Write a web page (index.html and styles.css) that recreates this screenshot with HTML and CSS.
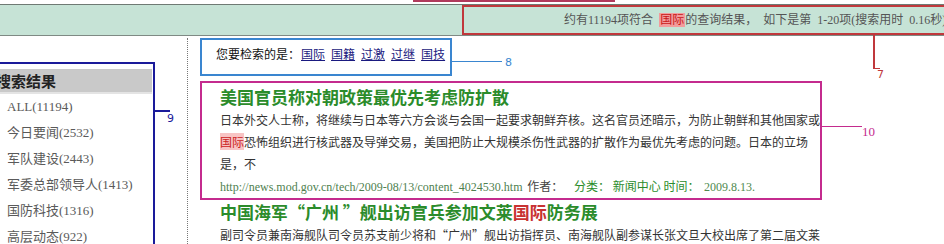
FILE: index.html
```html
<!DOCTYPE html>
<html lang="zh-CN">
<head>
    <meta charset="UTF-8">
    <title>搜索结果</title>
    <link rel="stylesheet" href="styles.css">
</head>
<body>

    <div class="topbar"><span class="topmark"></span></div>

    <!-- Barra de resultado -->
    <div class="header">
        <div class="stats">
            约有11194项符合&nbsp; <span class="hl">国际</span>的查询结果，&nbsp; 如下是第&nbsp; 1-20项(搜索用时&nbsp; 0.16秒)
            <span class="note note-7">7</span>
        </div>
    </div>

    <div class="main">
        <!-- Coluna lateral -->
        <div class="sidebar">
            <h2>搜索结果</h2>
            <ul class="cats">
                <li>ALL(11194)</li>
                <li>今日要闻(2532)</li>
                <li>军队建设(2443)</li>
                <li>军委总部领导人(1413)</li>
                <li>国防科技(1316)</li>
                <li>高层动态(922)</li>
            </ul>
            <span class="note note-9">9</span>
        </div>

        <!-- Resultados -->
        <div class="content">
            <div class="suggest">
                您要检索的是：<a href="#">国际</a><a href="#">国籍</a><a href="#">过激</a><a href="#">过继</a><a href="#">国技</a>
                <span class="note note-8">8</span>
            </div>

            <div class="result boxed">
                <h3>美国官员称对朝政策最优先考虑防扩散</h3>
                <p>日本外交人士称，将继续与日本等六方会谈与会国一起要求朝鲜弃核。这名官员还暗示，为防止朝鲜和其他国家或<span class="hl">国际</span>恐怖组织进行核武器及导弹交易，美国把防止大规模杀伤性武器的扩散作为最优先考虑的问题。日本的立场是，不</p>
                <div class="meta">
                    <span class="url">http://news.mod.gov.cn/tech/2009-08/13/content_4024530.htm</span>
                    <span class="author">作者：</span>
                    <span class="label cat">分类：</span>
                    <span class="label">新闻中心</span>
                    <span class="label">时间：</span>
                    <span class="date">2009.8.13.</span>
                </div>
                <span class="note note-10">10</span>
            </div>

            <div class="result">
                <h3>中国海军“广州 ”舰出访官兵参加文莱<span class="red">国际</span>防务展</h3>
                <p>副司令员兼南海舰队司令员苏支前少将和“广州”舰出访指挥员、南海舰队副参谋长张文旦大校出席了第二届文莱</p>
            </div>
        </div>
    </div>

</body>
</html>
```

FILE: styles.css
```css
/* Estilos gerais */
body {
    margin: 0;
    font-family: "Liberation Serif", "Noto Sans CJK SC", serif;
    font-size: 12px;
    color: #333333;
    background-color: #ffffff;
    overflow: hidden;
}

.topbar {
    height: 4px;
}

.topmark {
    display: block;
    margin-left: 413px;
    width: 202px;
    height: 2px;
    background-color: #b03a5c;
}

/* Barra verde */
.header {
    height: 30px;
    background-color: #c6e3d6;
    border-top: 1px solid #6f7a74;
    border-bottom: 1px solid #7f8a84;
}

.stats {
    position: relative;
    box-sizing: border-box;
    margin-left: 462px;
    width: 520px;
    height: 30px;
    padding-left: 100px;
    border: 2px solid #c0383c;
    line-height: 26px;
    white-space: nowrap;
    color: #555555;
}

.stats .hl {
    padding: 0 1px;
    background-color: #f29c9c;
    color: #c81818;
}

/* Anotações */
.note {
    position: absolute;
    font-family: "DejaVu Sans", sans-serif;
    font-size: 11px;
    line-height: 12px;
}

.note::before {
    content: "";
    position: absolute;
}

.note-7 {
    left: 413px;
    top: 62px;
    color: #c0383c;
}

.note-7::before {
    left: -4px;
    top: -35px;
    width: 5px;
    height: 34px;
    border-left: 2px solid #c0383c;
    border-bottom: 1px solid #c0383c;
}

.note-9 {
    left: 100%;
    top: 49px;
    margin-left: 14px;
    color: #1a1a9a;
}

.note-9::before {
    right: 4px;
    top: -3px;
    width: 17px;
    border-top: 2px solid #1a1a9a;
}

.note-8 {
    left: 100%;
    top: 17px;
    margin-left: 55px;
    color: #3a86d0;
}

.note-8::before {
    right: 10px;
    top: 4px;
    width: 50px;
    border-top: 1px solid #3a86d0;
}

.note-10 {
    left: 100%;
    top: 43px;
    margin-left: 42px;
    color: #c42b8e;
    font-family: "Liberation Serif", serif;
    font-size: 13px;
}

.note-10::before {
    right: 100%;
    top: 0;
    width: 40px;
    border-top: 1px solid #c42b8e;
}

/* Layout principal */
.main {
    display: flex;
    align-items: flex-start;
}

.sidebar {
    position: relative;
    width: 153px;
    min-height: 200px;
    margin-top: 26px;
    padding-top: 5px;
    border-top: 2px solid #1a1a9a;
    border-right: 2px solid #1a1a9a;
}

.sidebar h2 {
    margin: 0 1px 0 0;
    height: 23px;
    padding-left: 0;
    text-indent: -4px;
    background-color: #c9c9c9;
    border-bottom: 2px solid #e4e4e4;
    font-family: "Noto Sans CJK SC", sans-serif;
    font-size: 15px;
    line-height: 23px;
    color: #222222;
}

.cats {
    list-style: none;
    margin: 0;
    padding: 0 0 0 7px;
}

.cats li {
    font-size: 13px;
    line-height: 26px;
    color: #5a5a5a;
}

.content {
    margin-top: 2px;
    margin-left: 32px;
    min-height: 220px;
    padding-left: 12px;
    border-left: 1px dotted #777777;
}

/* Caixa de sugestão */
.suggest {
    position: relative;
    width: 234px;
    height: 22px;
    padding: 6px 0 6px 14px;
    border: 2px solid #3a86d0;
    font-family: "Noto Sans CJK SC", sans-serif;
    line-height: 16px;
    white-space: nowrap;
    color: #111111;
}

.suggest a {
    margin-left: 6px;
    color: #1a1a80;
    text-decoration: underline;
}

.suggest a:first-child {
    margin-left: 1px;
}

/* Resultados */
.result {
    width: 600px;
    padding-left: 20px;
    font-family: "Noto Sans CJK SC", sans-serif;
}

.result.boxed {
    position: relative;
    margin-top: 5px;
    padding: 2px 0 0 18px;
    border: 2px solid #c42b8e;
}

.result h3 {
    margin: 0;
    font-size: 17px;
    line-height: 24px;
    color: #2b8c2b;
}

.result h3 .red {
    color: #c83232;
}

.result p {
    margin: 0;
    line-height: 22px;
    color: #333333;
}

.result p .hl {
    background-color: #f8c4c4;
    color: #cc2222;
}

.meta {
    line-height: 22px;
    white-space: nowrap;
}

.meta .url {
    font-family: "Liberation Serif", serif;
    color: #4f7f4f;
}

.meta .author {
    margin-left: 2px;
    color: #444444;
}

.meta .label {
    color: #2b8c2b;
}

.meta .cat {
    margin-left: 8px;
}

.meta .date {
    margin-left: 2px;
    font-family: "Liberation Serif", serif;
    color: #4f8a4f;
}
```
